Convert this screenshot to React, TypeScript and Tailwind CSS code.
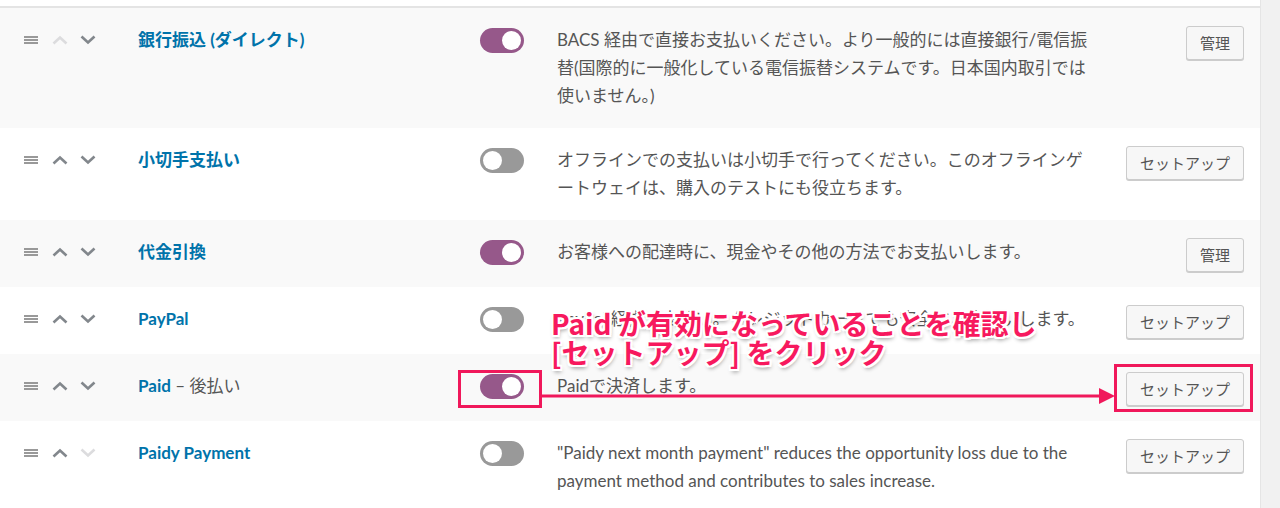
import React from 'react';

type Gateway = {
  name: string;
  suffix?: string;
  enabled: boolean;
  upDisabled?: boolean;
  downDisabled?: boolean;
  lines: string[];
  action: string;
};

const gateways: Gateway[] = [
  {
    name: '銀行振込 (ダイレクト)',
    enabled: true,
    upDisabled: true,
    lines: [
      'BACS 経由で直接お支払いください。より一般的には直接銀行/電信振',
      '替(国際的に一般化している電信振替システムです。日本国内取引では',
      '使いません。)',
    ],
    action: '管理',
  },
  {
    name: '小切手支払い',
    enabled: false,
    lines: [
      'オフラインでの支払いは小切手で行ってください。このオフラインゲ',
      'ートウェイは、購入のテストにも役立ちます。',
    ],
    action: 'セットアップ',
  },
  {
    name: '代金引換',
    enabled: true,
    lines: ['お客様への配達時に、現金やその他の方法でお支払いします。'],
    action: '管理',
  },
  {
    name: 'PayPal',
    enabled: false,
    lines: ['PayPal 経由で支払い。クレジットカードでも安全にお支払いします。'],
    action: 'セットアップ',
  },
  {
    name: 'Paid',
    suffix: ' – 後払い',
    enabled: true,
    lines: ['Paidで決済します。'],
    action: 'セットアップ',
  },
  {
    name: 'Paidy Payment',
    enabled: false,
    downDisabled: true,
    lines: [
      '"Paidy next month payment" reduces the opportunity loss due to the',
      'payment method and contributes to sales increase.',
    ],
    action: 'セットアップ',
  },
];

const Chevron = ({ up, disabled }: { up?: boolean; disabled?: boolean }) => (
  <svg width="16" height="10" viewBox="0 0 16 10" className={disabled ? 'text-[#dcdcde]' : 'text-[#82878c]'}>
    <path
      d={up ? 'M1.5 8.5 L8 2.5 L14.5 8.5' : 'M1.5 1.5 L8 7.5 L14.5 1.5'}
      fill="none"
      stroke="currentColor"
      strokeWidth="2.6"
    />
  </svg>
);

const Toggle = ({ on }: { on: boolean }) => (
  <div
    className={`mt-[2px] flex h-[25px] w-[44px] items-center rounded-full px-[3px] ${
      on ? 'justify-end bg-[#96588a]' : 'justify-start bg-[#999999]'
    }`}
  >
    <div className="h-[19px] w-[19px] rounded-full bg-white" />
  </div>
);

const Row = ({ g, striped }: { g: Gateway; striped: boolean }) => (
  <div
    className={`grid grid-cols-[138px_342px_77px_1fr_auto] items-start pt-[18px] pb-[15px] pr-[16px] ${
      striped ? 'bg-[#f9f9f9]' : 'bg-white'
    }`}
  >
    <div className="flex h-[28px] items-center pl-6">
      <div className="flex w-[14px] flex-col gap-[1px]">
        <div className="h-[2px] bg-[#999]" />
        <div className="h-[2px] bg-[#999]" />
        <div className="h-[2px] bg-[#999]" />
      </div>
      <div className="ml-[14px]">
        <Chevron up disabled={g.upDisabled} />
      </div>
      <div className="ml-[12px]">
        <Chevron disabled={g.downDisabled} />
      </div>
    </div>
    <div className="text-[17px] leading-[28px]">
      <span className="font-bold text-[#0073aa]">{g.name}</span>
      {g.suffix && <span className="text-[#555]">{g.suffix}</span>}
    </div>
    <div>
      <Toggle on={g.enabled} />
    </div>
    <div className="whitespace-nowrap pb-[3px] text-[17px] leading-[28px] text-[#555]">
      {g.lines.map((l, i) => (
        <div key={i}>{l}</div>
      ))}
    </div>
    <button className="h-[34px] rounded-[3px] border border-[#cccccc] bg-[#f7f7f7] px-[13px] text-[15px] text-[#555] shadow-[0_1px_0_#cccccc]">
      {g.action}
    </button>
  </div>
);

const App: React.FC = () => {
  return (
    <div className="relative h-[508px] w-[1280px] overflow-hidden bg-[#f1f1f1] font-['Lato','Noto_Sans_CJK_JP',sans-serif]">
      <div className="h-full w-[1261px] border-r border-[#e5e5e5] bg-white">
        <div className="h-[6px] bg-white" />
        <div className="border-t-2 border-[#e4e4e4]">
          {gateways.map((g, i) => (
            <Row key={g.name} g={g} striped={i % 2 === 0} />
          ))}
        </div>
      </div>

      {/* annotation */}
      <div className="absolute left-[458px] top-[370px] h-[38px] w-[84px] border-[3px] border-[#f0185b]" />
      <div className="absolute left-[1114px] top-[364px] h-[48px] w-[139px] border-[3px] border-[#f0185b]" />
      <svg className="absolute left-[541px] top-[387px]" width="575" height="18" viewBox="0 0 575 18">
        <line x1="0" y1="9" x2="562" y2="9" stroke="#f0185b" strokeWidth="3" />
        <polygon points="558,1 574,9 558,17" fill="#f0185b" />
      </svg>
      <div className="absolute left-[551px] top-[309px] font-['Noto_Sans_CJK_JP',sans-serif] text-[28px] font-bold leading-[29px] text-[#f7195e] [text-shadow:2px_0_0_#fff,-2px_0_0_#fff,0_2px_0_#fff,0_-2px_0_#fff,2px_2px_0_#fff,-2px_-2px_0_#fff,2px_-2px_0_#fff,-2px_2px_0_#fff,1px_3px_4px_rgba(0,0,0,0.45)]">
        <div>Paid が有効になっていることを確認し</div>
        <div>[セットアップ] をクリック</div>
      </div>
    </div>
  );
};

export default App;
